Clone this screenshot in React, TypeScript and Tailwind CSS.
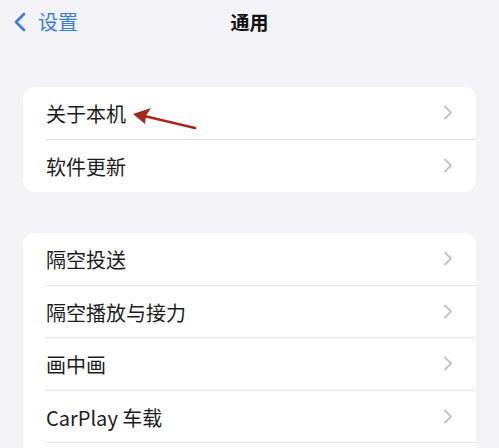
const groups = [
  ['关于本机', '软件更新'],
  ['隔空投送', '隔空播放与接力', '画中画', 'CarPlay 车载', ''],
]

function Chevron() {
  return (
    <svg width="10" height="15" viewBox="0 0 10 15" fill="none" className="text-[#c2c2c6]">
      <path d="M2 1.5 L8 7.5 L2 13.5" stroke="currentColor" strokeWidth="1.8" strokeLinecap="round" strokeLinejoin="round" />
    </svg>
  )
}

function Row({ label, last }: { label: string; last: boolean }) {
  return (
    <div className="flex h-[52.5px] items-stretch pl-[23px]">
      <div
        className={
          last
            ? 'flex flex-1 items-center justify-between pr-[23px]'
            : 'flex flex-1 items-center justify-between border-b border-[#e3e3e6] pr-[23px]'
        }
      >
        <span className="pt-[3px] text-[20px] leading-none text-[#1c1c1e]">{label}</span>
        {label && <Chevron />}
      </div>
    </div>
  )
}

export default function App() {
  return (
    <div
      className="relative h-[448px] w-[499px] overflow-hidden bg-[#f2f2f7]"
      style={{ fontFamily: '"Noto Sans CJK SC", "Noto Sans", sans-serif' }}
    >
      {/* Nav bar */}
      <div className="relative flex h-[43px] items-center justify-center">
        <div className="absolute left-[13px] top-0 flex h-full items-center gap-[11px] text-[#3b7ddd]">
          <svg width="14" height="20" viewBox="0 0 14 20" fill="none">
            <path d="M11 2 L3 10 L11 18" stroke="currentColor" strokeWidth="2.6" strokeLinecap="round" strokeLinejoin="round" />
          </svg>
          <span className="text-[20px] leading-none">设置</span>
        </div>
        <span className="text-[19px] font-semibold leading-none text-[#111]">通用</span>
      </div>

      <div className="mt-[44px] flex flex-col gap-[41px]">
        {groups.map((g, gi) => (
          <div key={gi} className="mx-[23px] overflow-hidden rounded-[12px] bg-white">
            {g.map((label, i) => (
              <Row key={label + i} label={label} last={gi === 0 && i === g.length - 1} />
            ))}
          </div>
        ))}
      </div>

      {/* Annotation arrow */}
      <svg className="pointer-events-none absolute left-0 top-0" width="499" height="448">
        <line x1="195" y1="128" x2="140" y2="115" stroke="#a8271d" strokeWidth="2.6" strokeLinecap="round" />
        <path d="M133 114 L151 108 L146 115.5 L145 124 Z" fill="#a8271d" />
      </svg>
    </div>
  )
}
